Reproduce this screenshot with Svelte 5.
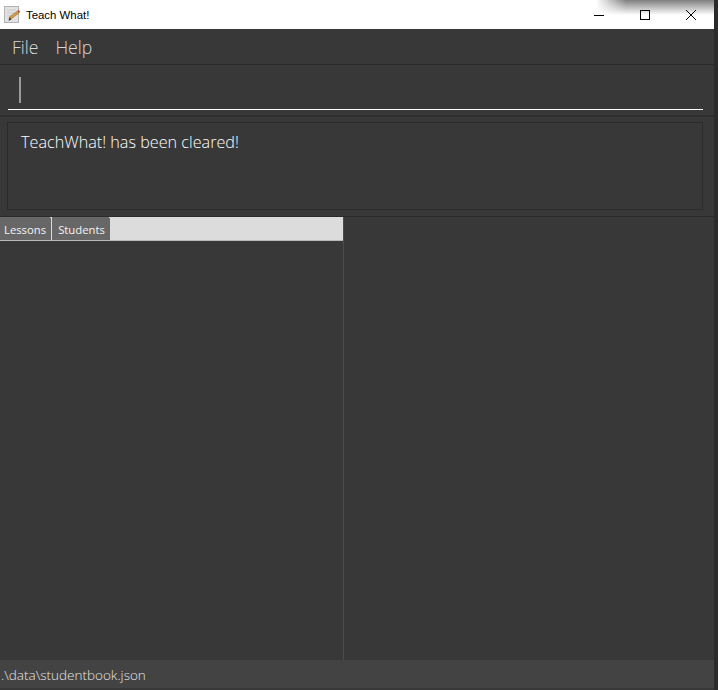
<script lang="ts">
  let tabs = ['Lessons', 'Students'];
</script>

<div class="window">
  <header class="titlebar">
    <svg class="app-icon" width="16" height="17" viewBox="0 0 16 17">
      <rect x="0.5" y="0.5" width="14" height="16" fill="#e2e2e2" stroke="#b4b4b4" />
      <path d="M3 4h9M3 7h9M3 10h4" stroke="#cacaca" />
      <path d="M5 13l1-2.5 7.5-5.5 1.5 2-8 6z" fill="#d99a3c" stroke="#7d623a" stroke-width="0.5" />
      <path d="M13.5 5l1.5-1 1 2-1 1z" fill="#b8483a" />
      <path d="M4.5 15l1-4 2 2.500z" fill="#44403a" />
    </svg>
    <span class="title">Teach What!</span>
    <div class="controls">
      <svg width="12" height="12" viewBox="0 0 12 12"><path d="M1 6.5h10" stroke="#000" /></svg>
      <svg width="12" height="12" viewBox="0 0 12 12"><rect x="1.5" y="1.5" width="9" height="9" fill="none" stroke="#000" /></svg>
      <svg width="12" height="12" viewBox="0 0 12 12"><path d="M1 1l10 10M11 1L1 11" stroke="#000" /></svg>
    </div>
    <div class="shadow"></div>
  </header>

  <nav class="menubar">
    <span>File</span>
    <span>Help</span>
  </nav>

  <section class="command">
    <div class="field"><span class="caret"></span></div>
  </section>

  <section class="result">
    <div class="result-box">TeachWhat! has been cleared!</div>
  </section>

  <main class="split">
    <div class="left">
      <div class="tabbar">
        {#each tabs as tab}
          <span class="tab">{tab}</span>
        {/each}
      </div>
    </div>
    <div class="right"></div>
  </main>

  <footer class="status">.\data\studentbook.json</footer>
</div>

<style>
  :global(body) {
    margin: 0;
    background: #fff;
  }

  .window {
    display: flex;
    flex-direction: column;
    box-sizing: border-box;
    width: 718px;
    height: 690px;
    overflow: hidden;
    border-right: 4px solid #2b2b2b;
    background: #383838;
    font-family: "Open Sans", "Liberation Sans", sans-serif;
    font-weight: 300;
    color: #e8e8e8;
  }

  .titlebar {
    position: relative;
    display: flex;
    align-items: center;
    flex: 0 0 29px;
    box-sizing: border-box;
    padding-left: 4px;
    background: #fff;
    color: #000;
  }

  .shadow {
    position: absolute;
    top: 0;
    left: 596px;
    right: 0;
    height: 15px;
    background: linear-gradient(to bottom, rgba(0, 0, 0, 0.5), rgba(0, 0, 0, 0));
    mask-image: linear-gradient(to right, transparent, #000 30px);
    pointer-events: none;
  }

  .app-icon {
    margin-right: 6px;
  }

  .title {
    font-family: "Liberation Sans", sans-serif;
    font-weight: 400;
    font-size: 11.4px;
  }

  .controls {
    display: flex;
    gap: 34px;
    margin-left: auto;
    padding-right: 17px;
  }

  .menubar {
    display: flex;
    flex: 0 0 36px;
    box-sizing: border-box;
    align-items: center;
    gap: 17px;
    padding-left: 12px;
    border-bottom: 1px solid #2b2b2b;
    font-size: 17.6px;
    color: #d8d8d8;
  }

  .command {
    flex: 0 0 52px;
    box-sizing: border-box;
    padding: 0 11px 0 8px;
    border-bottom: 2px solid #2e2e2e;
  }

  .field {
    box-sizing: border-box;
    height: 45px;
    padding: 12px 0 0 11px;
    border-bottom: 1px solid #fff;
  }

  .caret {
    display: block;
    width: 2px;
    height: 26px;
    background: #9a9a9a;
  }

  .result {
    flex: 0 0 100px;
    box-sizing: border-box;
    padding: 5px 11px 6px 7px;
    border-bottom: 1px solid #2b2b2b;
  }

  .result-box {
    box-sizing: border-box;
    height: 88px;
    padding: 7px 13px;
    border: 1px solid #2b2b2b;
    font-size: 16.2px;
    line-height: 24px;
    color: #fff;
  }

  .split {
    display: flex;
    flex: 1;
    min-height: 0;
  }

  .left {
    flex: 0 0 344px;
    box-sizing: border-box;
    border-right: 1px solid #4c4c4c;
  }

  .tabbar {
    display: flex;
    box-sizing: border-box;
    height: 24px;
    background: #dcdcdc;
    border-bottom: 1px solid #b8b8b8;
  }

  .tab {
    position: relative;
    display: flex;
    align-items: center;
    padding: 1px 5px 0 4px;
    background: #676767;
    border-right: 1px solid #dcdcdc;
    font-size: 11.3px;
    font-weight: 400;
    color: #f4f4f4;
  }

  /* small tick on the tab's top right corner */
  .tab::after {
    content: '';
    position: absolute;
    top: 0;
    right: -2px;
    width: 3px;
    height: 1px;
    background: #dcdcdc;
  }

  .tab:last-child {
    padding: 1px 5px 0 6px;
    border-right: none;
  }

  .right {
    flex: 1;
  }

  .status {
    flex: 0 0 30px;
    box-sizing: border-box;
    padding: 5px 0 0 1px;
    background: #434343;
    border-bottom: 2px solid #383838;
    font-size: 13.5px;
    line-height: 20px;
    color: #e6e6e6;
  }
</style>
